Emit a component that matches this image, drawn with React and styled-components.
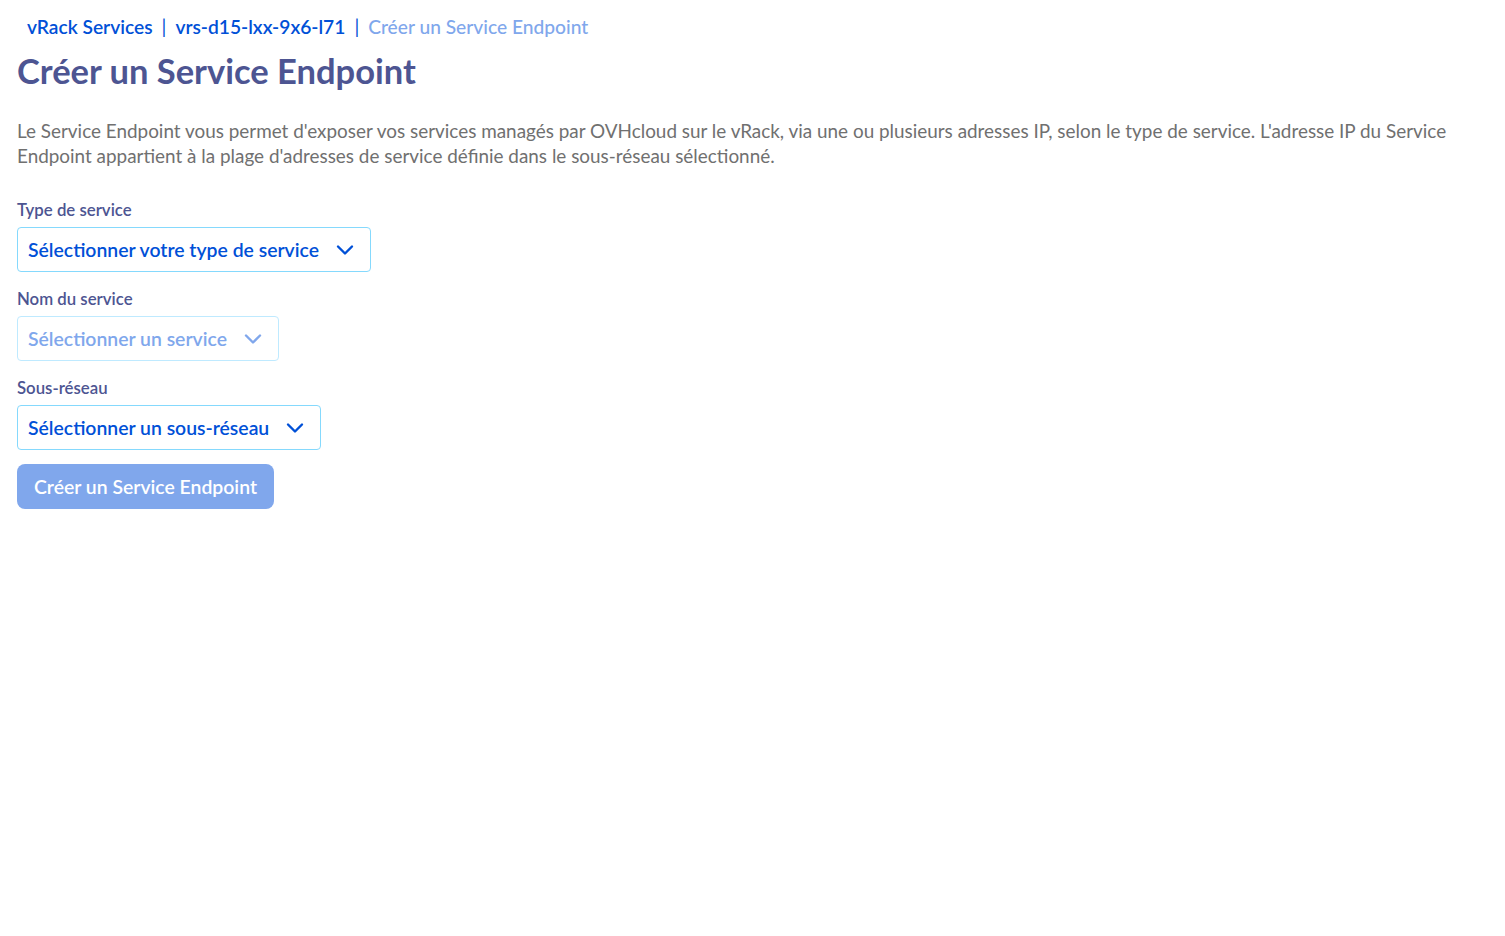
import React from "react";
import styled, { createGlobalStyle } from "styled-components";

const Global = createGlobalStyle`
  html, body { margin: 0; padding: 0; background: #fff; }
  body { font-family: Lato, "Noto Sans", sans-serif; }
  * { box-sizing: border-box; }
`;

const Page = styled.div`
  padding: 14px 17px;
  display: flex;
  flex-direction: column;
`;

const Breadcrumb = styled.nav`
  display: flex;
  align-items: center;
  padding-left: 10px;
  font-size: 19.2px;
  font-weight: 600;
  line-height: 26px;
`;

const Crumb = styled.span`
  color: ${(p) => (p.$current ? "#80a7ec" : "#0050d7")};
  font-weight: ${(p) => (p.$current ? 500 : 600)};
`;

const Sep = styled.span`
  color: #0050d7;
  margin: 0 9px;
  font-weight: 400;
`;

const Title = styled.h1`
  margin: 9px 0 0;
  color: #4d5592;
  font-size: 34.5px;
  font-weight: 700;
  line-height: 44px;
`;

const Description = styled.p`
  margin: 25px 0 0;
  color: #707070;
  font-size: 18.9px;
  line-height: 25px;
  font-weight: 400;
`;

const Form = styled.div`
  margin-top: 31px;
  display: flex;
  flex-direction: column;
  align-items: flex-start;
  gap: 16px;
`;

const Field = styled.div`
  display: flex;
  flex-direction: column;
  align-items: flex-start;
  gap: 6px;
`;

const Label = styled.label`
  color: #4d5592;
  font-size: 16.8px;
  font-weight: 600;
  line-height: 22px;
`;

const Select = styled.div`
  height: 45px;
  display: flex;
  align-items: center;
  gap: 16px;
  padding: 0 15px 0 10px;
  border: 1px solid ${(p) => (p.$disabled ? "#bfeaff" : "#85d9fd")};
  border-radius: 4px;
  color: ${(p) => (p.$disabled ? "#80a7ec" : "#0050d7")};
  font-size: 19.4px;
  font-weight: 600;
  cursor: ${(p) => (p.$disabled ? "not-allowed" : "pointer")};
`;

const Chevron = ({ color }) => (
  <svg width="20" height="20" viewBox="0 0 20 20" fill="none">
    <path d="M3 6.5 L10 13.5 L17 6.5" stroke={color} strokeWidth="2.4" strokeLinecap="round" strokeLinejoin="round" />
  </svg>
);

const Button = styled.button`
  height: 45px;
  padding: 0 17px;
  margin-top: -2px;
  border: none;
  border-radius: 8px;
  background: #80a7ec;
  color: #fff;
  font-family: inherit;
  font-size: 19.4px;
  font-weight: 600;
  cursor: not-allowed;
`;

export default function App() {
  return (
    <>
      <Global />
      <Page>
        <Breadcrumb>
          <Crumb>vRack Services</Crumb>
          <Sep>|</Sep>
          <Crumb>vrs-d15-lxx-9x6-l71</Crumb>
          <Sep>|</Sep>
          <Crumb $current>Créer un Service Endpoint</Crumb>
        </Breadcrumb>
        <Title>Créer un Service Endpoint</Title>
        <Description>
          Le Service Endpoint vous permet d'exposer vos services managés par OVHcloud sur le vRack, via une ou plusieurs adresses IP, selon le type de service. L'adresse IP du Service Endpoint appartient à la plage d'adresses de service définie dans le sous-réseau sélectionné.
        </Description>
        <Form>
          <Field>
            <Label>Type de service</Label>
            <Select>
              Sélectionner votre type de service
              <Chevron color="#0050d7" />
            </Select>
          </Field>
          <Field>
            <Label>Nom du service</Label>
            <Select $disabled>
              Sélectionner un service
              <Chevron color="#80a7ec" />
            </Select>
          </Field>
          <Field>
            <Label>Sous-réseau</Label>
            <Select>
              Sélectionner un sous-réseau
              <Chevron color="#0050d7" />
            </Select>
          </Field>
          <Button disabled>Créer un Service Endpoint</Button>
        </Form>
      </Page>
    </>
  );
}
